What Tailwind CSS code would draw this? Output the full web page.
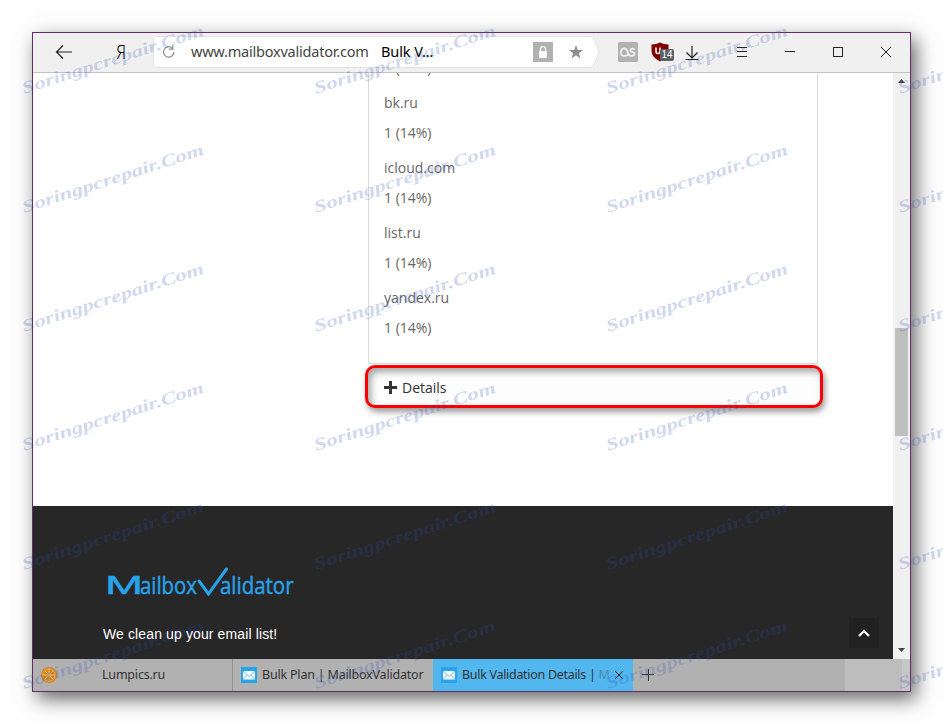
<!doctype html>
<html lang="ru">
<head>
  <meta charset="UTF-8">
  <meta name="viewport" content="width=device-width, initial-scale=1.0">
  <title>Bulk Validation Details | MailboxValidator</title>
  <script src="https://cdn.jsdelivr.net/npm/@tailwindcss/browser@4"></script>
</head>
<body class="relative h-screen overflow-hidden bg-[#fefefe] pt-8 pl-8 font-['Open_Sans',sans-serif]">

  <!-- Browser window -->
  <div class="flex h-[660px] w-[879px] flex-col border border-[#5f2f66] bg-white shadow-[5px_7px_18px_rgb(0_0_0/0.6)]">

    <!-- Toolbar -->
    <header class="flex h-10 shrink-0 items-center border-b border-[#c4c4c4] bg-[#f0f0f0] pb-px font-['Noto_Sans',sans-serif]">
      <svg class="ml-[22px] h-4 w-[18px]" viewBox="0 0 18 16" fill="none" stroke="#222" stroke-width="1.2">
        <path d="M17 8H1.500M8 1.500L1.500 8L8 14.500" />
      </svg>
      <span class="ml-[42px] w-[12px] origin-center scale-x-80 text-center text-[20px] leading-none font-light">Я</span>

      <div class="relative ml-[26px] flex h-8 w-[447px] items-center">
        <svg class="absolute inset-0 h-8 w-[447px]" viewBox="0 0 447 32">
          <path d="M2.500.5H438.500Q440 .5 441 2L446 16L441 29.500Q440 31.500 438.500 31.500H2.500Q.5 31.500 .5 29.500V2.500Q.5 .5 2.500 .5Z" fill="#fff" stroke="#e2e2e2" />
        </svg>
        <svg class="relative ml-[9px] h-3.5 w-3.5" viewBox="0 0 14 14" fill="none" stroke="#8c8c8c" stroke-width="1.2">
          <path d="M10.200 3.100A5.200 5.200 0 1 0 11.900 7M10.800 .5V4.200H6.800" />
        </svg>
        <span class="relative ml-[15px] w-[190px] text-[14.500px] tracking-[-0.21px] whitespace-nowrap text-[#444]">www.mailboxvalidator.com</span>
        <span class="relative w-[60px] text-[14.500px] tracking-[-0.1px] whitespace-nowrap text-black">Bulk V...</span>
        <div class="relative ml-[92px] flex h-5 w-5 items-center justify-center bg-[#b2b2b2]">
          <svg class="h-3 w-2.5" viewBox="0 0 10 12"><path d="M1 5H9V12H1Z" fill="#fff" /><path d="M2.500 5V3A2.500 2.500 0 0 1 7.500 3V5" fill="none" stroke="#fff" stroke-width="1.200" /></svg>
        </div>
        <svg class="relative ml-[16px] h-3.5 w-3.5" viewBox="0 0 14 14"><path d="M7 0L8.700 5H14L9.800 8.200L11.400 13.400L7 10.200L2.600 13.400L4.200 8.200L0 5H5.300Z" fill="#8e8e8e" /></svg>
      </div>

      <!-- Extensions -->
      <svg class="ml-[18px] h-5 w-5" viewBox="0 0 20 20">
        <rect width="20" height="20" rx="1.500" fill="#b2b2b2" />
        <path d="M10 12.800Q8.200 14 6.200 14Q2.900 13.800 2.900 10.200Q3 6.400 6.300 6.400Q8.500 6.400 9.400 9.300Q10.400 13.800 13.500 13.900Q16.600 13.800 16.600 11.600Q16.600 10.300 14.600 9.900Q12.200 9.500 12.400 8.100Q12.600 6.500 14.500 6.500Q16 6.500 16.600 7.600" fill="none" stroke="#f2f2f2" stroke-width="1.700" />
      </svg>
      <div class="relative ml-[13px] h-5 w-[23px]">
        <svg class="h-5 w-[18px]" viewBox="0 0 18 20">
          <path d="M9 .5Q12.500 2.500 17.500 2.500V9Q17.500 15 9 19.500Q.5 15 .5 9V2.500Q5.500 2.500 9 .5Z" fill="#800000" />
          <path d="M5 5.500V9.500Q5 11.500 7 11.500Q9 11.500 9 9.500V5.500" fill="none" stroke="#fff" stroke-width="1.500" />
        </svg>
        <span class="absolute top-[7px] left-[9px] flex h-3 w-3.5 items-center justify-center rounded-[2px] bg-[#5c6164] font-['Liberation_Sans',sans-serif] text-[10px] leading-none text-white">14</span>
      </div>
      <svg class="mt-0.5 ml-[11px] h-4 w-3.5" viewBox="0 0 14 16" fill="none" stroke="#222" stroke-width="1.200">
        <path d="M7 1V13M1.500 7.500L7 13L12.500 7.500M.5 14.500H13.500" />
      </svg>
      <svg class="ml-[38px] h-2.5 w-2.5" viewBox="0 0 10 10" stroke="#222" shape-rendering="crispEdges"><path d="M0 .5H10M0 4.500H10M0 9.500H10" /></svg>
      <svg class="ml-[38px] h-2.5 w-2.5" viewBox="0 0 10 10" stroke="#222" shape-rendering="crispEdges"><path d="M0 4.500H10" /></svg>
      <svg class="ml-[38px] h-2.5 w-2.5" viewBox="0 0 10 10" fill="none" stroke="#222"><path d="M.5 .5H9.500V9.500H.5Z" /></svg>
      <svg class="ml-[38px] h-2.5 w-2.5" viewBox="0 0 10 10" stroke="#222"><path d="M0 0L10 10M10 0L0 10" /></svg>
    </header>

    <!-- Page -->
    <div class="flex min-h-0 flex-1">
      <main class="flex w-[860px] shrink-0 flex-col">
        <div class="h-[433px] shrink-0 overflow-hidden pl-[335px]">
          <div class="h-[291px] w-[450px] overflow-hidden border-x border-b border-[#dadada] pl-[15px] text-[14px] leading-5 text-[#666]">
            <p class="-mt-[15px]">1 (14%)</p>
            <p class="mt-[15px]">bk.ru</p>
            <p class="mt-2.5">1 (14%)</p>
            <p class="mt-[15px]">icloud.com</p>
            <p class="mt-2.5">1 (14%)</p>
            <p class="mt-[15px]">list.ru</p>
            <p class="mt-2.5">1 (14%)</p>
            <p class="mt-[15px]">yandex.ru</p>
            <p class="mt-2.5">1 (14%)</p>
          </div>
          <div class="mt-px -ml-[3px] h-[43px] w-[458px] rounded-[10px] border-3 border-[#fb0000] bg-[#fdfdfd] shadow-[2px_4px_6px_rgb(0_0_0/0.4),inset_3px_4px_7px_rgb(0_0_0/0.35)]">
            <div class="flex h-full items-center pt-0.5 pl-4 text-[14px] text-[#333]">
              <svg class="mr-[5px] h-[13px] w-[13px]" viewBox="0 0 13 13" fill="#333"><path d="M5 0H8V5H13V8H8V13H5V8H0V5H5Z" /></svg>
              Details
            </div>
          </div>
        </div>

        <footer class="flex flex-1 justify-between bg-[#272727] pr-[14px] pl-[70px]">
          <div class="pt-[58px]">
            <!-- Logo -->
            <svg class="ml-1 h-9 w-[188px] overflow-visible" viewBox="0 0 188 36" fill="#26a3ea" stroke="#26a3ea" stroke-width=".45" font-family="'Open Sans', sans-serif" font-size="24">
              <text x="-2" y="30" font-size="25" font-family="'Liberation Sans', sans-serif" textLength="38" lengthAdjust="spacingAndGlyphs">M</text>
              <text x="33" y="30" textLength="57" lengthAdjust="spacingAndGlyphs">ailbox</text>
              <path d="M92 17L101.500 30L119.500 5" fill="none" stroke-width="3" stroke-linecap="round" />
              <text x="113" y="30" textLength="73.500" lengthAdjust="spacingAndGlyphs">alidator</text>
            </svg>
            <p class="mt-[24px] font-['Liberation_Sans',sans-serif] text-[14px] leading-5 tracking-[0.12px] text-white">We clean up your email list!</p>
          </div>
          <button class="mb-[11px] flex h-[30px] w-[30px] items-center justify-center self-end rounded-[2px] bg-[#212121]">
            <svg class="h-2 w-3" viewBox="0 0 12 8" fill="none" stroke="#fff" stroke-width="2.200"><path d="M1 7L6 2L11 7" /></svg>
          </button>
        </footer>
      </main>

      <!-- Scrollbar -->
      <div class="flex w-[17px] flex-col items-center bg-[#f0f0f0]">
        <svg class="mt-1.5 h-1 w-[7px]" viewBox="0 0 7 4"><path d="M0 4L3.500 0L7 4Z" fill="#444" /></svg>
        <div class="mt-[245px] h-[108px] w-[13px] bg-[#bfbfbf]"></div>
        <svg class="mt-auto mb-[7px] h-1 w-[7px]" viewBox="0 0 7 4"><path d="M0 0L3.500 4L7 0Z" fill="#444" /></svg>
      </div>
    </div>

    <!-- Tabs -->
    <nav class="flex h-8 shrink-0 bg-[#b1b1b1] font-['Noto_Sans',sans-serif] text-[12.500px] tracking-[-0.2px] whitespace-nowrap text-[#333]">
      <div class="flex w-[200px] items-center border-r border-[#929292] pl-2">
        <svg class="h-4 w-4" viewBox="0 0 16 16">
          <circle cx="8" cy="8" r="8" fill="#d98718" />
          <circle cx="8" cy="8" r="6.300" fill="none" stroke="#e9b467" stroke-width=".7" />
          <path d="M8 2V14M2 8H14M3.800 3.800L12.200 12.200M12.200 3.800L3.800 12.200" stroke="#edc080" stroke-width=".9" />
        </svg>
        <span class="ml-[45px] pt-px">Lumpics.ru</span>
      </div>
      <div class="flex w-[200px] items-center pl-2">
        <svg class="h-4 w-4 shrink-0" viewBox="0 0 16 16"><rect width="16" height="16" fill="#26a3ea" /><path d="M2 4H14V12.500H2Z" fill="#fff" /><path d="M2 4L8 9.500L14 4M2 12.500L6 8.200M14 12.500L10 8.200" fill="none" stroke="#55b4ea" stroke-width=".9" /></svg>
        <span class="ml-[5px] pt-px">Bulk Plan | MailboxValidator</span>
      </div>
      <div class="flex w-[200px] items-center bg-[#52b7ef] pl-2">
        <svg class="h-4 w-4 shrink-0" viewBox="0 0 16 16"><rect width="16" height="16" fill="#26a3ea" /><path d="M2 4H14V12.500H2Z" fill="#fff" /><path d="M2 4L8 9.500L14 4M2 12.500L6 8.200M14 12.500L10 8.200" fill="none" stroke="#55b4ea" stroke-width=".9" /></svg>
        <span class="ml-[5px] w-[147px] overflow-hidden pt-px tracking-[-0.3px]">Bulk Validation Details | <span class="text-[#333]/35">M</span></span>
        <svg class="ml-[6px] h-2 w-2" viewBox="0 0 8 8" stroke="#222"><path d="M0 0L8 8M8 0L0 8" /></svg>
      </div>
      <svg class="ml-[9px] h-3 w-3 self-center" viewBox="0 0 12 12" stroke="#333" shape-rendering="crispEdges"><path d="M0 5.500H12M6.500 0V12" /></svg>
      <div class="ml-auto w-[57px] bg-[#bdbdbd]"></div>
      <div class="w-2 bg-[#c6c6c6]"></div>
    </nav>
  </div>

  <!-- Watermarks -->
  <svg id="marks" class="pointer-events-none absolute inset-0 h-[724px] w-[943px]" font-family="'Liberation Serif', serif" font-size="17" font-style="italic" font-weight="bold"></svg>

<script>
  const marks = document.querySelector("#marks");
  let html = "";
  for (let row = 0; row < 6; row++) {
    for (let col = 0; col < 4; col++) {
      const x = 24 + col * 292;
      const y = 94 + row * 119;
      html += `<text transform="translate(${x} ${y}) rotate(-18)" textLength="190" lengthAdjust="spacingAndGlyphs" fill="#2c4fb4" fill-opacity="0.23">Soringpcrepair.Com</text>`;
    }
  }
  marks.innerHTML = html;
</script>
</body>
</html>
